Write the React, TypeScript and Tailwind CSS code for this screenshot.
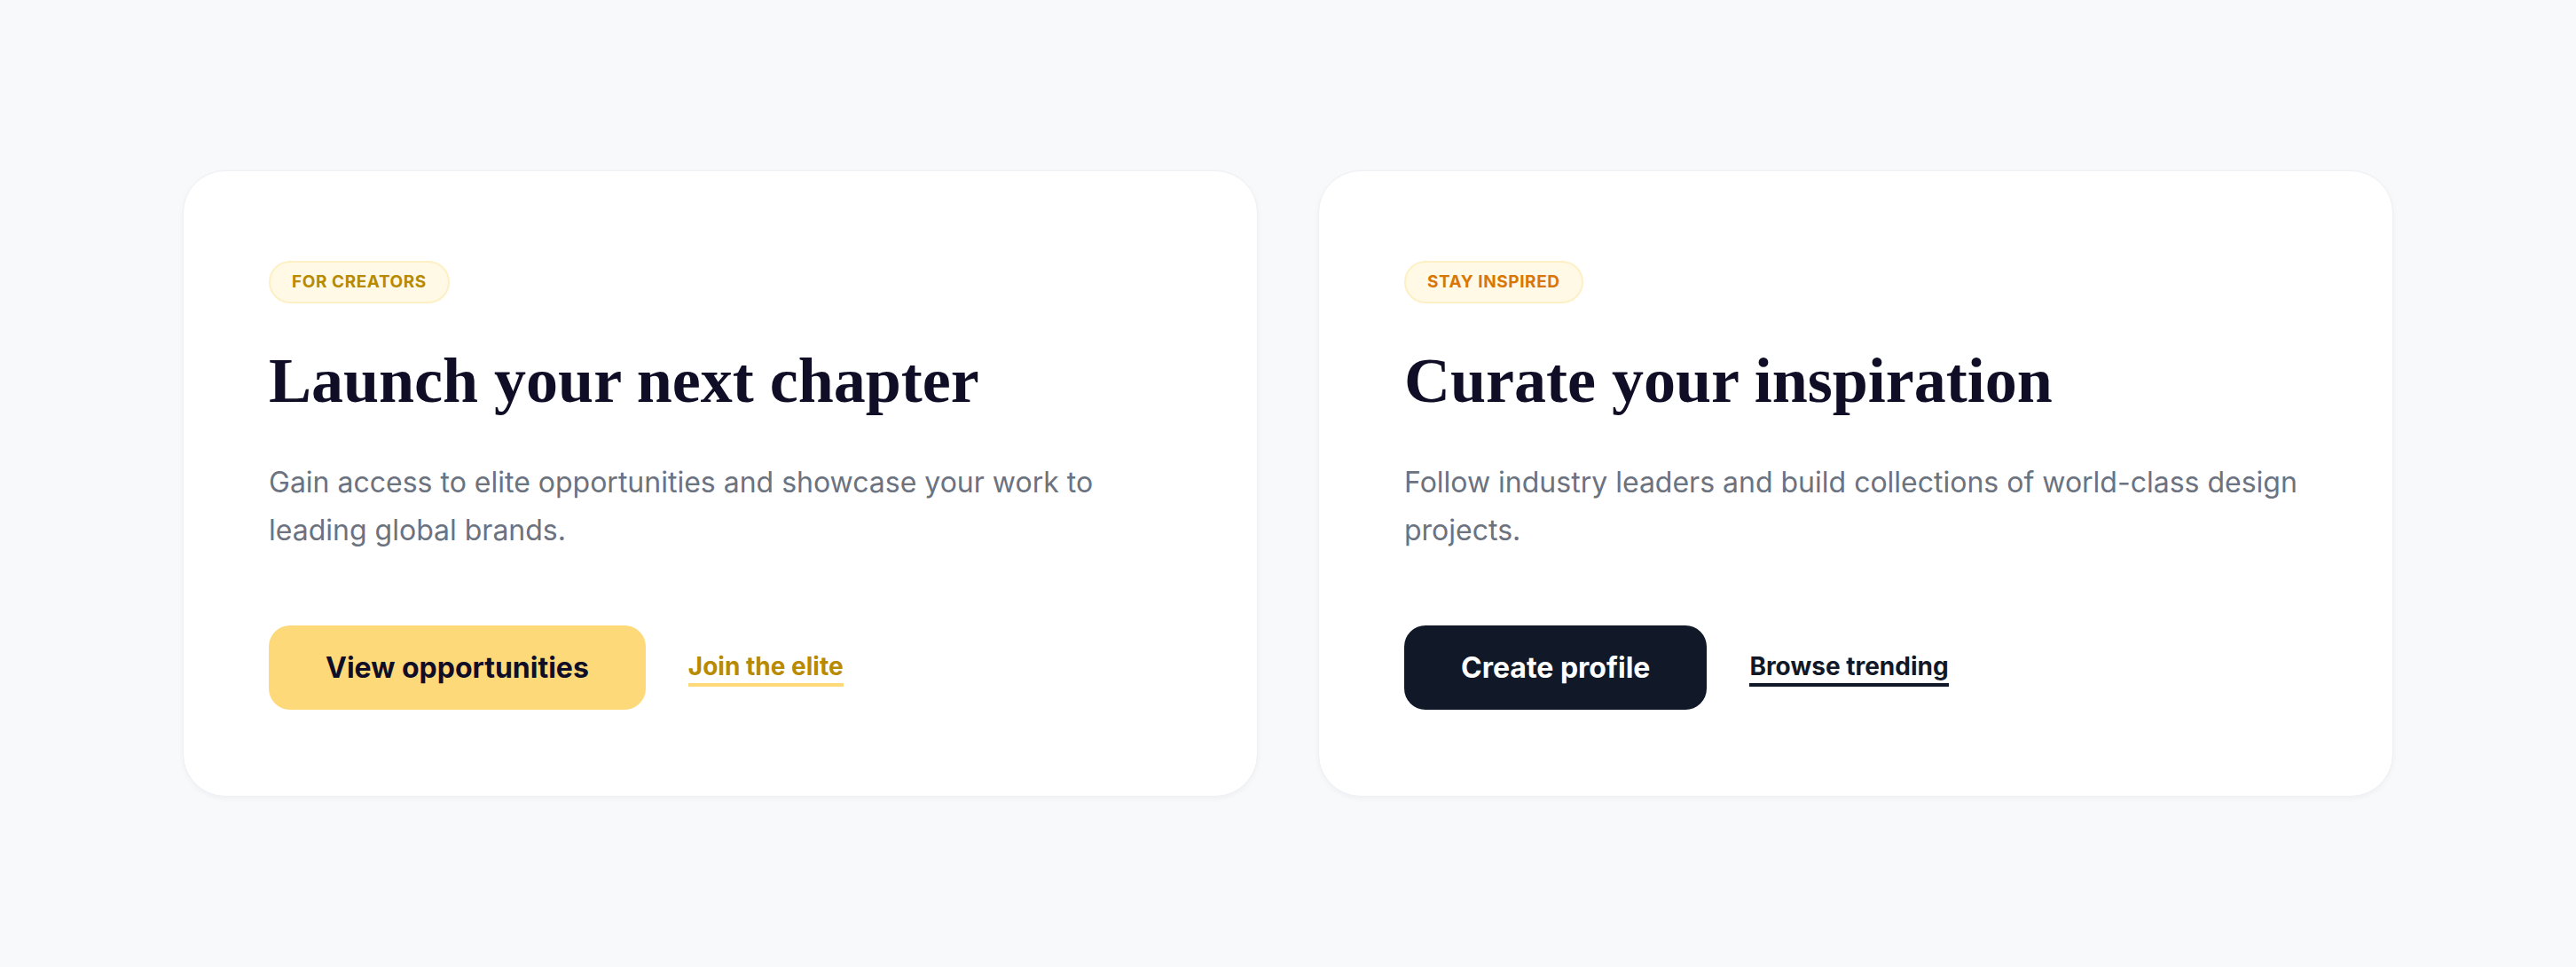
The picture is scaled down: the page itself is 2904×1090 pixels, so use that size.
import React from 'react';

interface PromoCardProps {
  badge: string;
  badgeTone: string;
  title: string;
  body: string;
  primaryLabel: string;
  primaryClass: string;
  linkLabel: string;
  linkClass: string;
}

const PromoCard: React.FC<PromoCardProps> = ({
  badge,
  badgeTone,
  title,
  body,
  primaryLabel,
  primaryClass,
  linkLabel,
  linkClass,
}) => {
  return (
    <div className="bg-white rounded-[48px] border border-[#eef0f3] shadow-[0_2px_6px_rgba(15,23,42,0.04)] pt-[101px] pb-[97px] px-[96px]">
      <span
        className={`inline-flex items-center h-[48px] px-[24px] rounded-full border-2 border-[#fdf0c4] bg-[#fff9e6] text-[19px] font-bold tracking-[0.03em] uppercase ${badgeTone}`}
      >
        {badge}
      </span>
      <h2 className="mt-[48px] font-['Liberation_Serif',serif] font-bold text-[72px] leading-[1.1] text-[#0f0e26]">
        {title}
      </h2>
      <p className="mt-[48px] text-[32px] leading-[54px] text-[#6b7280]">{body}</p>
      <div className="mt-[80px] flex items-center gap-[48px]">
        <button
          className={`h-[95px] px-[64px] rounded-[24px] text-[32px] font-bold ${primaryClass}`}
        >
          {primaryLabel}
        </button>
        <a
          href="#"
          className={`text-[28px] font-bold leading-[1.2] pt-[4px] pb-[2px] border-b-4 ${linkClass}`}
        >
          {linkLabel}
        </a>
      </div>
    </div>
  );
};

const App: React.FC = () => {
  return (
    <div className="min-h-screen bg-[#f8f9fb] flex items-center justify-center font-['Inter',sans-serif]">
      <div className="w-[2492px] grid grid-cols-2 gap-[68px]">
        <PromoCard
          badge="For creators"
          badgeTone="text-[#b88a00]"
          title="Launch your next chapter"
          body="Gain access to elite opportunities and showcase your work to leading global brands."
          primaryLabel="View opportunities"
          primaryClass="bg-[#fdd97a] text-[#0f0e26]"
          linkLabel="Join the elite"
          linkClass="text-[#b88a00] border-[#fdd97a]"
        />
        <PromoCard
          badge="Stay inspired"
          badgeTone="text-[#d97706]"
          title="Curate your inspiration"
          body="Follow industry leaders and build collections of world-class design projects."
          primaryLabel="Create profile"
          primaryClass="bg-[#111827] text-white"
          linkLabel="Browse trending"
          linkClass="text-[#111827] border-[#111827]"
        />
      </div>
    </div>
  );
};

export default App;
